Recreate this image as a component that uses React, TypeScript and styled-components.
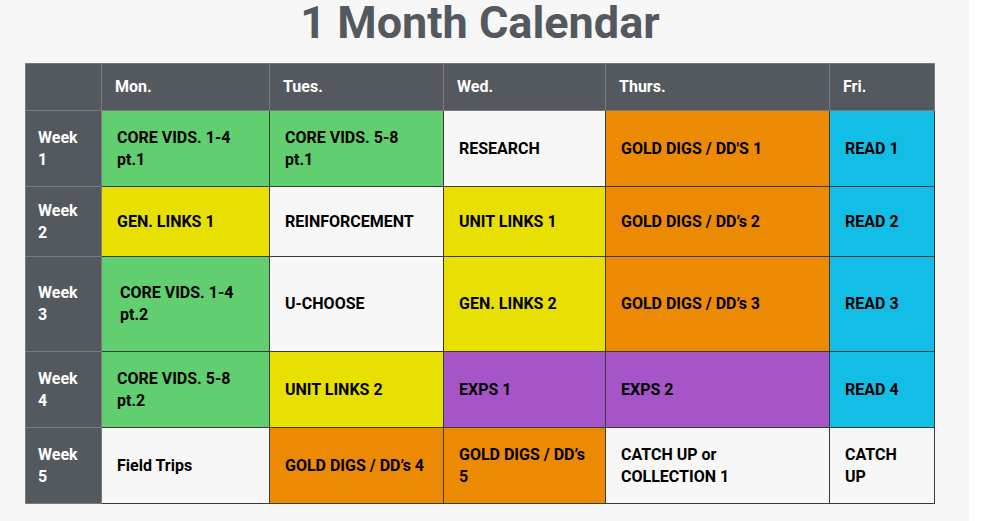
import React, { FC } from 'react';
import styled, { createGlobalStyle } from 'styled-components';

type Tone = 'green' | 'yellow' | 'orange' | 'blue' | 'purple' | 'plain';

const tones: Record<Tone, string> = {
  green: '#61ce70',
  yellow: '#e8e000',
  orange: '#ed8a04',
  blue: '#12bde6',
  purple: '#a655c8',
  plain: '#f7f7f7'
};

const GlobalStyle = createGlobalStyle`
  html, body {
    margin: 0;
    background: #ffffff;
  }

  body {
    font-family: Roboto, 'Liberation Sans', sans-serif;
  }
`;

const Page = styled.div`
  width: 969px;
  min-height: 521px;
  background: #f7f7f7;
  overflow: hidden;
`;

const Title = styled.h1`
  margin: 0;
  padding: 2px 9px 0 0;
  font-size: 45px;
  line-height: 42px;
  font-weight: 700;
  color: #54595f;
  text-align: center;
`;

const Table = styled.table`
  margin: 19px 0 0 25px;
  width: 909px;
  border-collapse: collapse;
  table-layout: fixed;
  font-size: 16px;
  line-height: 22px;
  font-weight: 700;
`;

const HeadCell = styled.th`
  height: 46px;
  padding: 0 0 0 13px;
  background: #54595f;
  color: #ffffff;
  border: 1px solid #7a7a7a;
  text-align: left;
  vertical-align: middle;
  font-weight: 700;
`;

const Row = styled.tr<{ height: number }>`
  height: ${({ height }) => height}px;
`;

const WeekCell = styled.th`
  padding: 0 14px 0 12px;
  background: #54595f;
  color: #ffffff;
  border: 1px solid #7a7a7a;
  text-align: left;
  vertical-align: middle;
  font-weight: 700;
`;

const Cell = styled.td<{ tone: Tone; indent?: boolean }>`
  padding: 0 15px 0 ${({ indent }) => indent ? 18 : 15}px;
  background: ${({ tone }) => tones[tone]};
  color: #000000;
  border: 1px solid #3a3a3a;
  vertical-align: middle;
`;

interface Entry {
  text: string;
  tone: Tone;
  indent?: boolean;
}

interface Week {
  label: string;
  height: number;
  days: Entry[];
}

const days = ['Mon.', 'Tues.', 'Wed.', 'Thurs.', 'Fri.'];
const widths = [76, 168, 174, 162, 224, 105];

const weeks: Week[] = [
  {
    label: 'Week 1',
    height: 76,
    days: [
      { text: 'CORE VIDS. 1-4 pt.1', tone: 'green' },
      { text: 'CORE VIDS. 5-8 pt.1', tone: 'green' },
      { text: 'RESEARCH', tone: 'plain' },
      { text: "GOLD DIGS / DD'S 1", tone: 'orange' },
      { text: 'READ 1', tone: 'blue' }
    ]
  },
  {
    label: 'Week 2',
    height: 70,
    days: [
      { text: 'GEN. LINKS 1', tone: 'yellow' },
      { text: 'REINFORCEMENT', tone: 'plain' },
      { text: 'UNIT LINKS 1', tone: 'yellow' },
      { text: 'GOLD DIGS / DD’s 2', tone: 'orange' },
      { text: 'READ 2', tone: 'blue' }
    ]
  },
  {
    label: 'Week 3',
    height: 95,
    days: [
      { text: 'CORE VIDS. 1-4 pt.2', tone: 'green', indent: true },
      { text: 'U-CHOOSE', tone: 'plain' },
      { text: 'GEN. LINKS 2', tone: 'yellow' },
      { text: 'GOLD DIGS / DD’s 3', tone: 'orange' },
      { text: 'READ 3', tone: 'blue' }
    ]
  },
  {
    label: 'Week 4',
    height: 76,
    days: [
      { text: 'CORE VIDS. 5-8 pt.2', tone: 'green' },
      { text: 'UNIT LINKS 2', tone: 'yellow' },
      { text: 'EXPS 1', tone: 'purple' },
      { text: 'EXPS 2', tone: 'purple' },
      { text: 'READ 4', tone: 'blue' }
    ]
  },
  {
    label: 'Week 5',
    height: 76,
    days: [
      { text: 'Field Trips', tone: 'plain' },
      { text: 'GOLD DIGS / DD’s 4', tone: 'orange' },
      { text: 'GOLD DIGS / DD’s 5', tone: 'orange' },
      { text: 'CATCH UP or COLLECTION 1', tone: 'plain' },
      { text: 'CATCH UP', tone: 'plain' }
    ]
  }
];

const App: FC = () => {
  return (
    <Page>
      <GlobalStyle />
      <Title>1 Month Calendar</Title>
      <Table>
        <colgroup>
          {widths.map((w, i) => <col key={i} style={{ width: w }} />)}
        </colgroup>
        <thead>
          <tr>
            <HeadCell />
            {days.map(day => <HeadCell key={day}>{day}</HeadCell>)}
          </tr>
        </thead>
        <tbody>
          {weeks.map(week => (
            <Row key={week.label} height={week.height}>
              <WeekCell>{week.label}</WeekCell>
              {week.days.map((entry, i) => (
                <Cell key={i} tone={entry.tone} indent={entry.indent}>{entry.text}</Cell>
              ))}
            </Row>
          ))}
        </tbody>
      </Table>
    </Page>
  );
};

export default App;
